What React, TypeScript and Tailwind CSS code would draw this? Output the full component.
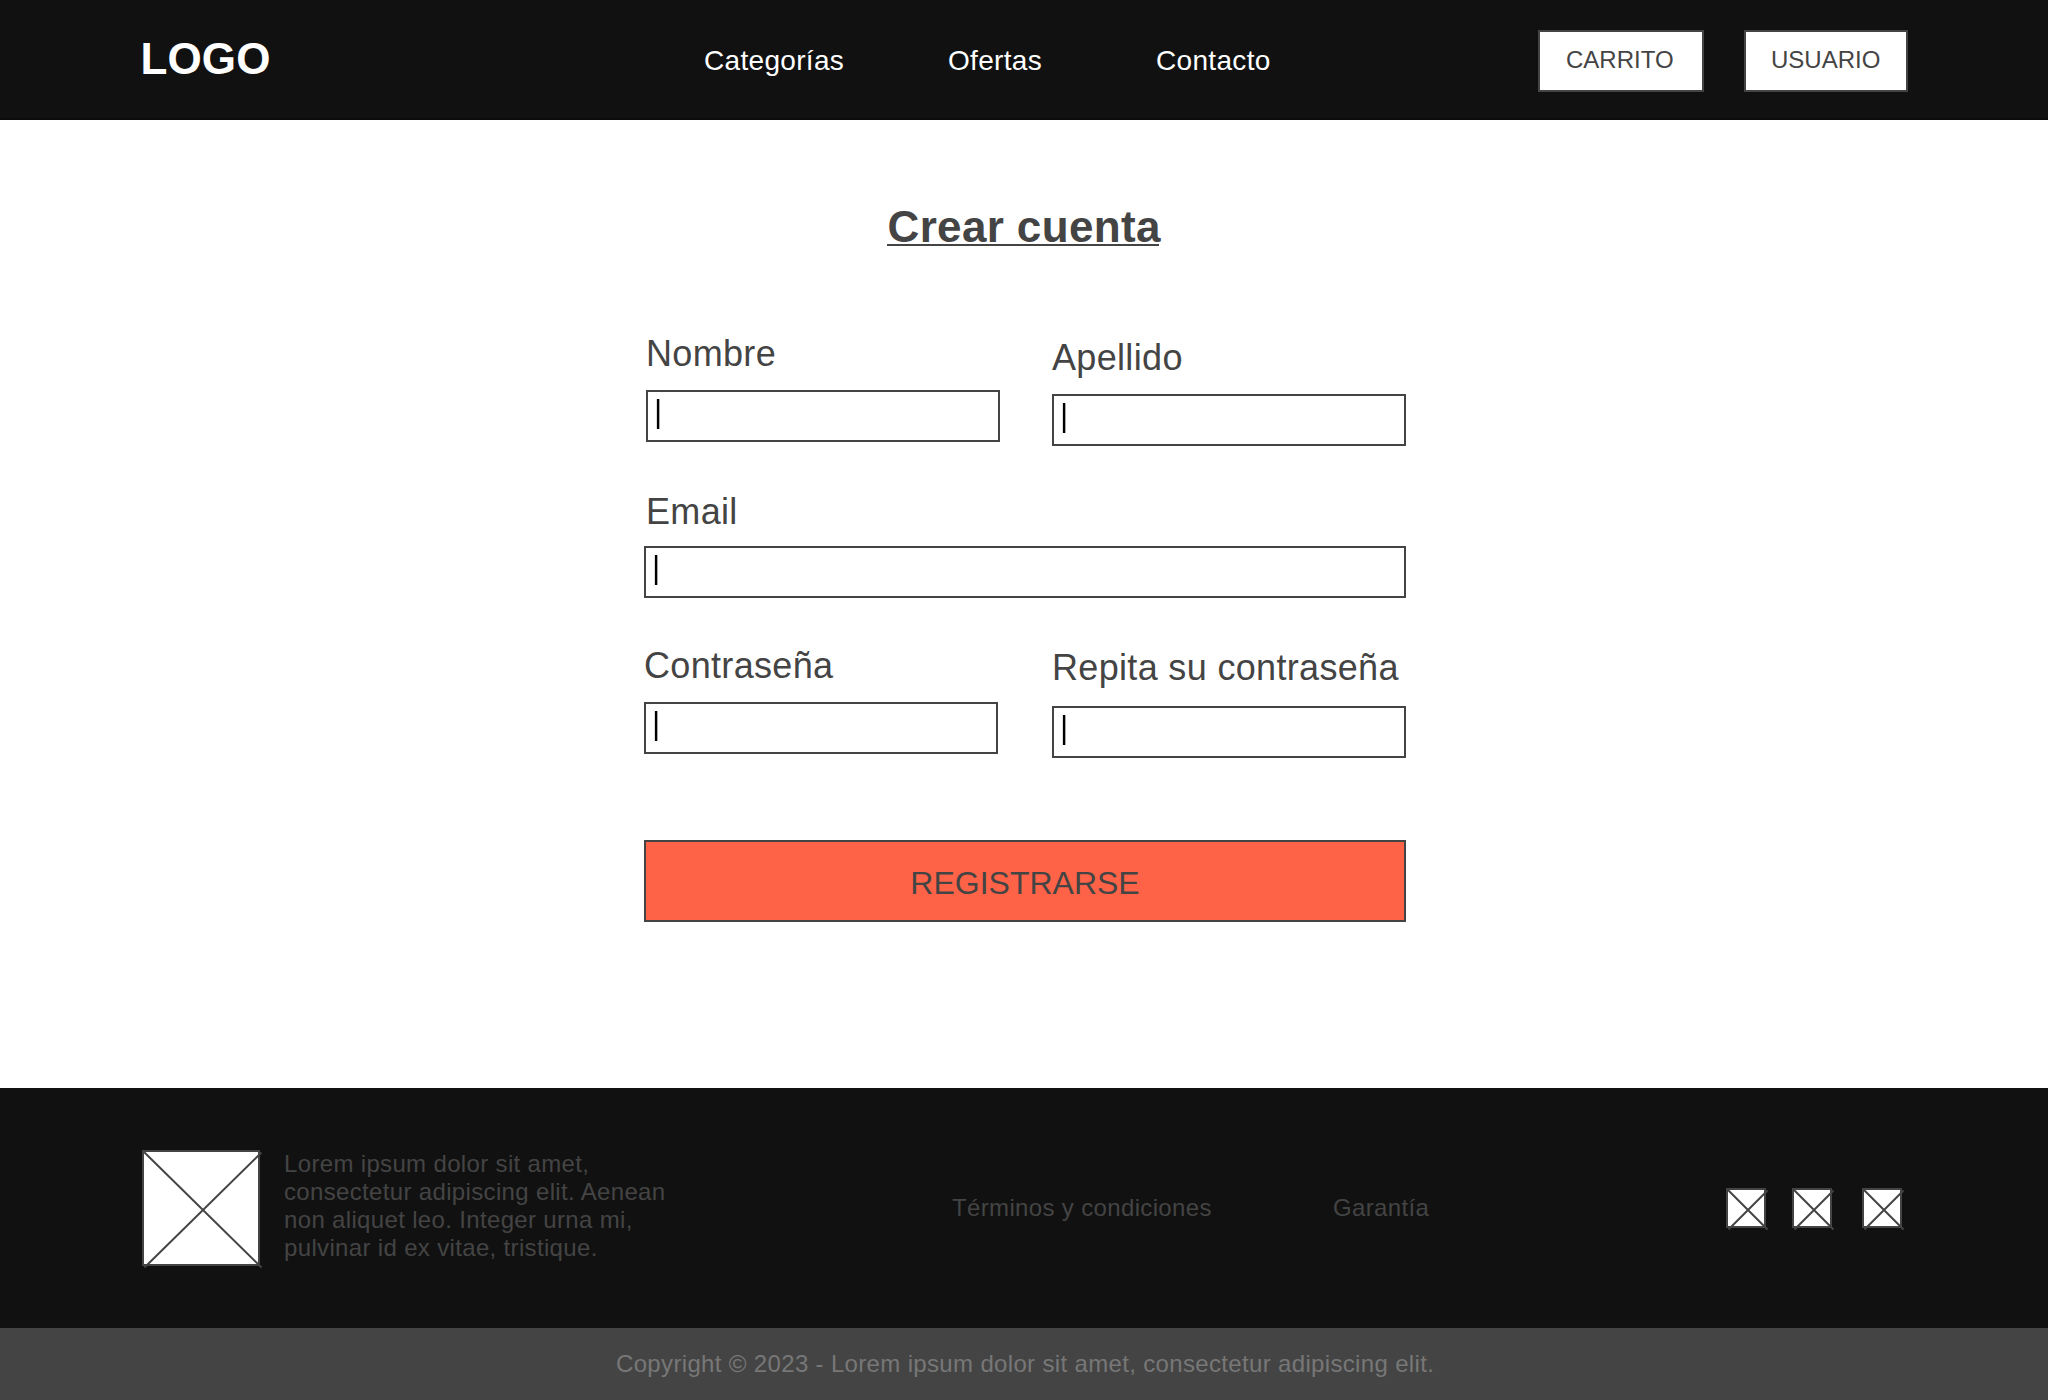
import type { ReactNode } from "react";

function Field({
  label,
  className = "",
  labelClass = "",
}: {
  label: string;
  className?: string;
  labelClass?: string;
}) {
  return (
    <label className={`block ${className}`}>
      <span className={`block whitespace-nowrap text-[36px] leading-10 tracking-[0.33px] ${labelClass}`}>{label}</span>
      <span className="flex h-[52px] border-2 border-[#444444] bg-white pl-[9px] pt-[7px]">
        <span className="h-[30px] w-[2px] bg-black shadow-[1px_0_0_#aaaaaa,-1px_0_0_#dddddd]" />
      </span>
    </label>
  );
}

function Placeholder({ width, height }: { width: number; height: number }) {
  return (
    <svg width={width} height={height} className="block shrink-0 overflow-visible" fill="none" stroke="#444444" strokeWidth="2">
      <rect x="1" y="1" width={width - 2} height={height - 2} fill="#ffffff" />
      <path d={`M2 2L${width + 1.5} ${height + 1.5}M${width + 1.5} 2.5L2.5 ${height + 1.5}`} />
    </svg>
  );
}

function HeaderButton({ children, className }: { children: ReactNode; className: string }) {
  return (
    <button className={`h-[62px] border-2 border-[#444444] bg-white text-left text-[24px] leading-7 text-[#444444] ${className}`}>
      {children}
    </button>
  );
}

export default function App() {
  return (
    <div className="h-[1400px] w-[2048px] overflow-hidden bg-white font-['Liberation_Sans',Arial,sans-serif] text-[#444444]">
      <header className="flex h-[120px] items-start border-b-2 border-[#0c0c0c] bg-[#111111] text-white">
        <div className="ml-[140px] mt-[35px] w-[564px] indent-[0.5px] text-[44px] font-bold leading-[48px] tracking-[0.1px]">LOGO</div>
        <nav className="mt-[45px] grid w-[834px] grid-cols-[244px_208px_200px] text-[28px] leading-8 tracking-[0.32px]">
          <a>Categorías</a>
          <a>Ofertas</a>
          <a>Contacto</a>
        </nav>
        <div className="mt-[30px] flex gap-10">
          <HeaderButton className="w-[166px] pb-[2px] pl-[26px]">CARRITO</HeaderButton>
          <HeaderButton className="w-[164px] pb-[2px] pl-[25px]">USUARIO</HeaderButton>
        </div>
      </header>

      <main className="h-[968px] pt-[83px]">
        <h1 className="ml-[887px] h-[43px] w-[272px] whitespace-nowrap border-b-2 border-[#444444] indent-[0.5px] text-[44px] font-bold leading-[48px] tracking-[0.36px]">
          Crear cuenta
        </h1>
        <form className="ml-[644px] mt-[88px] w-[762px]">
          <div className="flex justify-between">
            <Field label="Nombre" className="ml-[2px] w-[354px]" labelClass="mb-4" />
            <Field label="Apellido" className="w-[354px] pt-1" labelClass="mb-4" />
          </div>
          <Field label="Email" className="mt-[46px]" labelClass="mb-[14px] pl-[2px]" />
          <div className="mt-12 flex justify-between">
            <Field label="Contraseña" className="w-[354px]" labelClass="mb-4" />
            <Field label="Repita su contraseña" className="w-[354px] pt-[2px]" labelClass="mb-[18px]" />
          </div>
          <button
            type="button"
            className="mt-[82px] block h-[82px] w-full border-2 border-[#444444] bg-[#ff6347] pt-[4px] text-center text-[32px] leading-9"
          >
            REGISTRARSE
          </button>
        </form>
      </main>

      <footer>
        <div className="flex h-[240px] items-start bg-[#111111]">
          <div className="ml-[142px] mt-[62px]">
            <Placeholder width={118} height={116} />
          </div>
          <p className="ml-[24px] mt-[62px] w-[400px] text-[24px] leading-7 tracking-[0.34px]">
            Lorem ipsum dolor sit amet,
            <br />
            consectetur adipiscing elit. Aenean
            <br />
            non aliquet leo. Integer urna mi,
            <br />
            pulvinar id ex vitae, tristique.
          </p>
          <nav className="ml-[268px] mt-[106px] grid w-[774px] grid-cols-[381px_200px] text-[24px] leading-7 tracking-[0.35px]">
            <a>Términos y condiciones</a>
            <a>Garantía</a>
          </nav>
          <div className="mt-[100px] flex">
            <Placeholder width={40} height={40} />
            <div className="ml-[26px] mr-[30px]">
              <Placeholder width={40} height={40} />
            </div>
            <Placeholder width={40} height={40} />
          </div>
        </div>
        <div className="h-[72px] bg-[#444444] pl-[616px] pt-[22px] text-[24px] leading-7 tracking-[0.34px] text-[#777777]">
          Copyright © 2023 - Lorem ipsum dolor sit amet, consectetur adipiscing elit.
        </div>
      </footer>
    </div>
  );
}
